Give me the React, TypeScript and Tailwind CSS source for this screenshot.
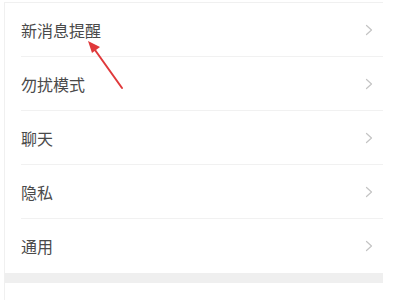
import React from "react";

const items = ["新消息提醒", "勿扰模式", "聊天", "隐私", "通用"];

function Chevron() {
  return (
    <svg width="8" height="12" viewBox="0 0 8 12" fill="none" className="shrink-0">
      <path d="M1.5 1.5 L6.5 6 L1.5 10.5" stroke="#c4c4c4" strokeWidth="1.2" strokeLinecap="round" strokeLinejoin="round" />
    </svg>
  );
}

export default function App() {
  return (
    <div
      className="relative w-[400px] h-[300px] overflow-hidden bg-white"
      style={{ fontFamily: '"Noto Sans CJK SC", "Noto Sans", sans-serif' }}
    >
      <div className="ml-[4px] mt-[2px] w-[379px] border-l border-t border-[#f0f0f0]">
        {items.map((label, i) => (
          <div key={label} className="flex h-[54px] items-center pl-[16px]">
            <div
              className={`flex h-full flex-1 items-center justify-between pr-[10px] ${
                i < items.length - 1 ? "border-b border-[#f1f1f1]" : ""
              }`}
            >
              <span className="text-[16px] leading-none text-[#4a4a4a]">{label}</span>
              <Chevron />
            </div>
          </div>
        ))}
        <div className="h-[10px] bg-[#efefef]" />
        <div className="h-[30px] bg-white" />
      </div>

      {/* red annotation arrow */}
      <svg className="absolute left-0 top-0" width="400" height="300" viewBox="0 0 400 300">
        <line x1="122" y1="88" x2="95" y2="50" stroke="#e0393b" strokeWidth="2" strokeLinecap="round" />
        <polygon points="88,41 100,47 92,53" fill="#e0393b" />
      </svg>
    </div>
  );
}
